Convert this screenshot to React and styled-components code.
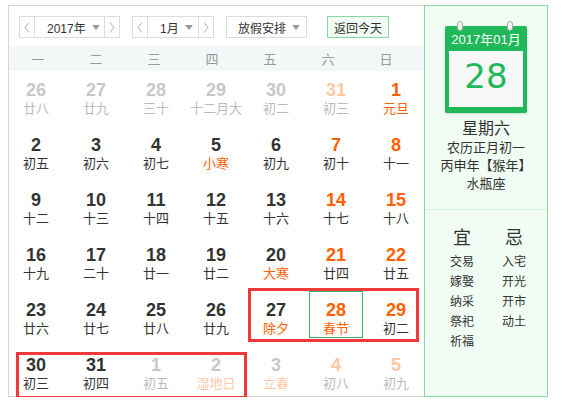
import React from "react";
import styled, { createGlobalStyle } from "styled-components";

const Global = createGlobalStyle`
  html, body { margin: 0; padding: 0; background: #fff; }
  body { padding: 5px 0 0 8px; font-family: "Liberation Sans", "Noto Sans CJK SC", sans-serif; color: #333; }
  * { box-sizing: border-box; }
`;

const FONT = `"Liberation Sans", "Noto Sans CJK SC", sans-serif`;

const Wrapper = styled.div`
  position: relative;
  display: flex;
  width: 540px;
  height: 392px;
`;

const LeftPane = styled.div`
  width: 416px;
  height: 392px;
  border: 1px solid #d4d4d4;
  border-right: none;
  display: flex;
  flex-direction: column;
`;

const Toolbar = styled.div`
  height: 40px;
  padding: 10px 0 0 10px;
  display: flex;
  align-items: flex-start;
`;

const Group = styled.div`
  display: flex;
  height: 22px;
  width: ${(p) => p.$w}px;
  margin-right: ${(p) => p.$mr || 0}px;
  border: 1px solid #dcdcdc;
  background: #fff;
`;

const ArrowBtn = styled.div`
  width: 15px;
  flex: none;
  display: flex;
  align-items: center;
  justify-content: center;
  border-left: ${(p) => (p.$side === "right" ? "1px solid #dcdcdc" : "none")};
  border-right: ${(p) => (p.$side === "left" ? "1px solid #dcdcdc" : "none")};
`;

const Select = styled.div`
  flex: 1;
  min-width: 0;
  display: flex;
  align-items: center;
  justify-content: space-between;
  padding: ${(p) => p.$pad};
  font-size: 12px;
  color: #333;
  white-space: nowrap;
  font-family: ${FONT};
`;

const Caret = styled.span`
  flex: none;
  width: 0;
  height: 0;
  border-left: 4px solid transparent;
  border-right: 4px solid transparent;
  border-top: 5px solid #999;
  margin-top: 1px;
`;

const TodayBtn = styled.div`
  width: 62px;
  height: 22px;
  border: 1px solid #86d9a2;
  background: #f1fcf4;
  display: flex;
  align-items: center;
  justify-content: center;
  font-size: 12px;
  color: #333;
  white-space: nowrap;
  margin-left: 8px;
`;

const WeekHeader = styled.div`
  height: 25px;
  background: #f3f7f8;
  display: grid;
  grid-template-columns: repeat(7, 58px);
  align-items: center;
`;

const WeekDay = styled.div`
  text-align: center;
  font-size: 13px;
  color: #999;
`;

const DayGrid = styled.div`
  display: grid;
  grid-template-columns: repeat(7, 54px);
  grid-auto-rows: 47px;
  column-gap: 6px;
  row-gap: 8px;
`;

const Cell = styled.div`
  display: flex;
  flex-direction: column;
  align-items: center;
  padding-top: 8px;
  border: 1px solid ${(p) => (p.$today ? "#33b565" : "transparent")};
`;

const Num = styled.div`
  font-family: ${FONT};
  font-weight: bold;
  font-size: 18px;
  line-height: 20px;
  color: ${(p) => p.$c};
`;

const Lunar = styled.div`
  font-size: 13px;
  line-height: 16px;
  margin-top: 1px;
  color: ${(p) => p.$c};
  white-space: nowrap;
`;

const Panel = styled.div`
  width: 124px;
  height: 392px;
  border: 1px solid #84dca2;
  background: #f0fcf4;
  display: flex;
  flex-direction: column;
`;

const TopSection = styled.div`
  height: 204px;
  border-bottom: 1px solid #d4f3df;
  display: flex;
  flex-direction: column;
  align-items: center;
  padding-top: 20px;
`;

const CalIcon = styled.div`
  position: relative;
  width: 82px;
  background: #1fb95a;
  border-radius: 2px;
  padding: 0 4px 6px;
  box-shadow: 0 1px 2px rgba(0, 0, 0, 0.15);
`;

const Ring = styled.span`
  position: absolute;
  top: -5px;
  left: ${(p) => p.$x}px;
  width: 6px;
  height: 10px;
  border-radius: 3px;
  background: #f2f2f2;
  border: 1px solid #a9a9a9;
`;

const CalHead = styled.div`
  height: 25px;
  line-height: 27px;
  text-align: center;
  color: #fff;
  font-size: 13px;
  font-family: ${FONT};
`;

const CalBody = styled.div`
  height: 56px;
  background: #f7f7f7;
  text-align: center;
  font-family: "DejaVu Sans", sans-serif;
  font-size: 34px;
  line-height: 50px;
  color: #1fb95a;
`;

const InfoLine = styled.div`
  font-size: ${(p) => p.$fs}px;
  line-height: ${(p) => p.$lh}px;
  margin-top: ${(p) => p.$mt || 0}px;
  color: #333;
  white-space: nowrap;
`;

const BottomSection = styled.div`
  display: flex;
  padding: 16px 0 0 11px;
`;

const Column = styled.div`
  width: 52px;
  display: flex;
  flex-direction: column;
  align-items: center;
`;

const ColTitle = styled.div`
  font-size: 18px;
  line-height: 24px;
  color: #333;
  margin-bottom: 2px;
`;

const ColItem = styled.div`
  font-size: 12px;
  line-height: 20px;
  color: #333;
`;

const Annotation = styled.div`
  position: absolute;
  left: ${(p) => p.$l}px;
  top: ${(p) => p.$t}px;
  width: ${(p) => p.$w}px;
  height: ${(p) => p.$h}px;
  border: 3px solid #f03a3a;
  pointer-events: none;
`;

const Chevron = ({ dir }) => (
  <svg width="6" height="11" viewBox="0 0 6 11">
    <path
      d={dir === "left" ? "M5 0.5 L1 5.5 L5 10.5" : "M1 0.5 L5 5.5 L1 10.5"}
      fill="none"
      stroke="#aaa"
      strokeWidth="1"
    />
  </svg>
);

const DARK = "#333";
const ORANGE = "#ff6000";
const GRAY = "#c8c8c8";
const LGRAY = "#bbb";
const PALE = "#fdc9a6";

// [num, lunar, numColor, lunarColor, today]
const days = [
  ["26", "廿八", GRAY, LGRAY],
  ["27", "廿九", GRAY, LGRAY],
  ["28", "三十", GRAY, LGRAY],
  ["29", "十二月大", GRAY, LGRAY],
  ["30", "初二", GRAY, LGRAY],
  ["31", "初三", PALE, LGRAY],
  ["1", "元旦", ORANGE, ORANGE],
  ["2", "初五", DARK, DARK],
  ["3", "初六", DARK, DARK],
  ["4", "初七", DARK, DARK],
  ["5", "小寒", DARK, ORANGE],
  ["6", "初九", DARK, DARK],
  ["7", "初十", ORANGE, DARK],
  ["8", "十一", ORANGE, DARK],
  ["9", "十二", DARK, DARK],
  ["10", "十三", DARK, DARK],
  ["11", "十四", DARK, DARK],
  ["12", "十五", DARK, DARK],
  ["13", "十六", DARK, DARK],
  ["14", "十七", ORANGE, DARK],
  ["15", "十八", ORANGE, DARK],
  ["16", "十九", DARK, DARK],
  ["17", "二十", DARK, DARK],
  ["18", "廿一", DARK, DARK],
  ["19", "廿二", DARK, DARK],
  ["20", "大寒", DARK, ORANGE],
  ["21", "廿四", ORANGE, DARK],
  ["22", "廿五", ORANGE, DARK],
  ["23", "廿六", DARK, DARK],
  ["24", "廿七", DARK, DARK],
  ["25", "廿八", DARK, DARK],
  ["26", "廿九", DARK, DARK],
  ["27", "除夕", DARK, ORANGE],
  ["28", "春节", ORANGE, ORANGE, true],
  ["29", "初二", ORANGE, DARK],
  ["30", "初三", DARK, DARK],
  ["31", "初四", DARK, DARK],
  ["1", "初五", GRAY, LGRAY],
  ["2", "湿地日", GRAY, PALE],
  ["3", "立春", GRAY, PALE],
  ["4", "初八", PALE, LGRAY],
  ["5", "初九", PALE, LGRAY],
];

const weekNames = ["一", "二", "三", "四", "五", "六", "日"];
const yi = ["交易", "嫁娶", "纳采", "祭祀", "祈福"];
const ji = ["入宅", "开光", "开市", "动土"];

export default function App() {
  return (
    <>
      <Global />
      <Wrapper>
        <LeftPane>
          <Toolbar>
            <Group $w={101} $mr={12}>
              <ArrowBtn $side="left">
                <Chevron dir="left" />
              </ArrowBtn>
              <Select $pad="0 4px 0 12px">
                <span>2017年</span>
                <Caret />
              </Select>
              <ArrowBtn $side="right">
                <Chevron dir="right" />
              </ArrowBtn>
            </Group>
            <Group $w={82} $mr={12}>
              <ArrowBtn $side="left">
                <Chevron dir="left" />
              </ArrowBtn>
              <Select $pad="0 5px 0 12px">
                <span>1月</span>
                <Caret />
              </Select>
              <ArrowBtn $side="right">
                <Chevron dir="right" />
              </ArrowBtn>
            </Group>
            <Group $w={81} $mr={12}>
              <Select $pad="0 6px 0 11px">
                <span>放假安排</span>
                <Caret />
              </Select>
            </Group>
            <TodayBtn>返回今天</TodayBtn>
          </Toolbar>
          <WeekHeader>
            {weekNames.map((w) => (
              <WeekDay key={w}>{w}</WeekDay>
            ))}
          </WeekHeader>
          <DayGrid>
            {days.map(([n, l, nc, lc, today], i) => (
              <Cell key={i} $today={today}>
                <Num $c={nc}>{n}</Num>
                <Lunar $c={lc}>{l}</Lunar>
              </Cell>
            ))}
          </DayGrid>
        </LeftPane>
        <Panel>
          <TopSection>
            <CalIcon>
              <Ring $x={12} />
              <Ring $x={62} />
              <CalHead>2017年01月</CalHead>
              <CalBody>28</CalBody>
            </CalIcon>
            <InfoLine $fs={16} $lh={20} $mt={6}>星期六</InfoLine>
            <InfoLine $fs={13} $lh={18}>农历正月初一</InfoLine>
            <InfoLine $fs={13} $lh={18}>丙申年【猴年】</InfoLine>
            <InfoLine $fs={13} $lh={18}>水瓶座</InfoLine>
          </TopSection>
          <BottomSection>
            <Column>
              <ColTitle>宜</ColTitle>
              {yi.map((t) => (
                <ColItem key={t}>{t}</ColItem>
              ))}
            </Column>
            <Column>
              <ColTitle>忌</ColTitle>
              {ji.map((t) => (
                <ColItem key={t}>{t}</ColItem>
              ))}
            </Column>
          </BottomSection>
        </Panel>
        <Annotation $l={240} $t={283} $w={171} $h={54} />
        <Annotation $l={8} $t={347} $w={231} $h={47} />
      </Wrapper>
    </>
  );
}
